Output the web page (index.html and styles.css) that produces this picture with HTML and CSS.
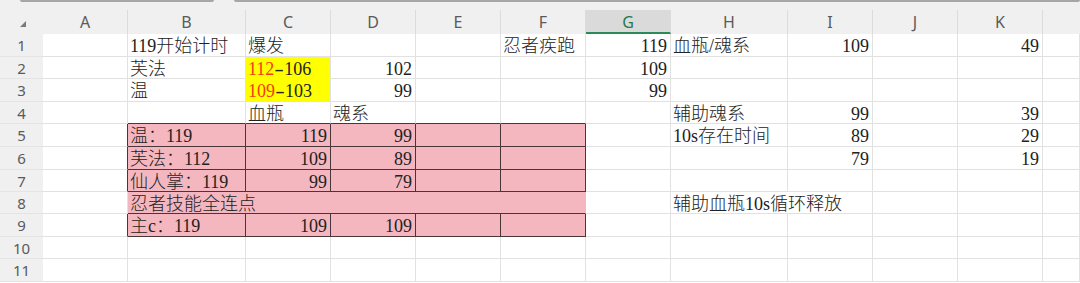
FILE: index.html
```html
<!DOCTYPE html>
<html lang="zh">
<head>
<meta charset="utf-8">
<title>Sheet</title>
<link rel="stylesheet" href="styles.css">
</head>
<body>
<div class="sheet">
  <div class="topbar"><span class="tab tab-a"></span><span class="tab tab-b"></span></div>
  <div class="hrow">
    <div class="hc corner"><svg width="6" height="6" viewBox="0 0 6 6"><polygon points="6,0 6,6 0,6" fill="#7a7a7a"/></svg></div>
    <div class="hc">A</div><div class="hc">B</div><div class="hc">C</div><div class="hc">D</div>
    <div class="hc">E</div><div class="hc">F</div><div class="hc sel">G</div><div class="hc">H</div>
    <div class="hc">I</div><div class="hc">J</div><div class="hc">K</div><div class="hc last"></div>
  </div>
  <div class="grid">
    <!-- row 1 -->
    <div class="rn">1</div><div class="c"></div><div class="c">119开始计时</div><div class="c">爆发</div><div class="c"></div><div class="c"></div><div class="c">忍者疾跑</div><div class="c r">119</div><div class="c">血瓶/魂系</div><div class="c r">109</div><div class="c"></div><div class="c r">49</div><div class="c"></div>
    <!-- row 2 -->
    <div class="rn">2</div><div class="c"></div><div class="c">芙法</div><div class="c yl yl-top"><span class="red">112</span><span class="dash">-</span>106</div><div class="c r">102</div><div class="c"></div><div class="c"></div><div class="c r">109</div><div class="c"></div><div class="c"></div><div class="c"></div><div class="c"></div><div class="c"></div>
    <!-- row 3 -->
    <div class="rn">3</div><div class="c"></div><div class="c">温</div><div class="c yl"><span class="red">109</span><span class="dash">-</span>103</div><div class="c r">99</div><div class="c"></div><div class="c"></div><div class="c r">99</div><div class="c"></div><div class="c"></div><div class="c"></div><div class="c"></div><div class="c"></div>
    <!-- row 4 -->
    <div class="rn">4</div><div class="c"></div><div class="c bt"></div><div class="c bt">血瓶</div><div class="c bt">魂系</div><div class="c bt"></div><div class="c bt"></div><div class="c"></div><div class="c">辅助魂系</div><div class="c r">99</div><div class="c"></div><div class="c r">39</div><div class="c"></div>
    <!-- row 5 -->
    <div class="rn">5</div><div class="c bl"></div><div class="c pk">温：119</div><div class="c pk r">119</div><div class="c pk r">99</div><div class="c pk"></div><div class="c pk"></div><div class="c"></div><div class="c">10s存在时间</div><div class="c r">89</div><div class="c"></div><div class="c r">29</div><div class="c"></div>
    <!-- row 6 -->
    <div class="rn">6</div><div class="c bl"></div><div class="c pk">芙法：112</div><div class="c pk r">109</div><div class="c pk r">89</div><div class="c pk"></div><div class="c pk"></div><div class="c"></div><div class="c"></div><div class="c r">79</div><div class="c"></div><div class="c r">19</div><div class="c"></div>
    <!-- row 7 -->
    <div class="rn">7</div><div class="c bl"></div><div class="c pk">仙人掌：119</div><div class="c pk r">99</div><div class="c pk r">79</div><div class="c pk"></div><div class="c pk"></div><div class="c"></div><div class="c"></div><div class="c"></div><div class="c"></div><div class="c"></div><div class="c"></div>
    <!-- row 8 -->
    <div class="rn">8</div><div class="c"></div><div class="c pk merged">忍者技能全连点</div><div class="c"></div><div class="c span2">辅助血瓶10s循环释放</div><div class="c"></div><div class="c"></div><div class="c"></div>
    <!-- row 9 -->
    <div class="rn">9</div><div class="c bl"></div><div class="c pk">主c：119</div><div class="c pk r">109</div><div class="c pk r">109</div><div class="c pk"></div><div class="c pk"></div><div class="c"></div><div class="c"></div><div class="c"></div><div class="c"></div><div class="c"></div><div class="c"></div>
    <!-- row 10 -->
    <div class="rn">10</div><div class="c"></div><div class="c"></div><div class="c"></div><div class="c"></div><div class="c"></div><div class="c"></div><div class="c"></div><div class="c"></div><div class="c"></div><div class="c"></div><div class="c"></div><div class="c"></div>
    <!-- row 11 -->
    <div class="rn">11</div><div class="c"></div><div class="c"></div><div class="c"></div><div class="c"></div><div class="c"></div><div class="c"></div><div class="c"></div><div class="c"></div><div class="c"></div><div class="c"></div><div class="c"></div><div class="c"></div>
  </div>
</div>
</body>
</html>
```

FILE: styles.css
```css
:root {
  --cols: 43px 85px 118px 85px 85px 85px 85px 85px 117px 85px 85px 85px 37px;
  --grid: #e1e1e1;
  --dark: #4a3638;
  --pink: #f4b7bf;
  --yellow: #ffff00;
}

* { box-sizing: border-box; }

html, body {
  margin: 0;
  padding: 0;
  background: #ffffff;
}

.sheet {
  width: 1080px;
  height: 283px;
  overflow: hidden;
  background: #ffffff;
}

.topbar {
  height: 2px;
  display: flex;
  background: #f0f0f0;
}

.tab {
  display: block;
  height: 2px;
  background: #a6a6a6;
  border-radius: 0 0 2px 2px;
}

.tab-a { margin-left: 20px; width: 194px; }
.tab-b { margin-left: 20px; flex: 1; }

.hrow {
  display: grid;
  grid-template-columns: var(--cols);
  height: 32px;
  padding-top: 8px;
  background: #f0f0f0;
}

.hc {
  height: 24px;
  border-right: 1px solid #dcdcdc;
  font-family: "Noto Sans", "Liberation Sans", sans-serif;
  font-size: 16px;
  line-height: 25px;
  color: #5a5a5a;
  text-align: center;
}

.hc.corner {
  border-right: none;
  display: flex;
  align-items: center;
  justify-content: center;
  padding-left: 2px;
  padding-top: 3px;
}

.hc.last { border-right: none; }

.hc.sel {
  background: #dadada;
  color: #1f7a4c;
  border-bottom: 2px solid #2a8a59;
  line-height: 24px;
}

.grid {
  display: grid;
  grid-template-columns: var(--cols);
  grid-template-rows: 23px 22px 23px 22px 23px 23px 22px 22px 23px 22px 23px;
}

.rn {
  background: #f0f0f0;
  border-bottom: 1px solid #e4e4e4;
  font-family: "Noto Sans", "Liberation Sans", sans-serif;
  font-size: 15px;
  line-height: 22px;
  color: #5a5a5a;
  text-align: center;
}

.c {
  border-right: 1px solid var(--grid);
  border-bottom: 1px solid var(--grid);
  padding: 3px 3px 0 2px;
  font-family: "Liberation Serif", "Noto Sans CJK SC", serif;
  font-weight: 300;
  font-size: 18px;
  line-height: 19px;
  color: #222222;
  white-space: nowrap;
  overflow: visible;
}

.c.r { text-align: right; }

.c.yl { background: var(--yellow); }
.c.yl-top { border-bottom-color: var(--yellow); }

.red { color: #f63c12; }

.dash {
  display: inline-block;
  transform: scaleX(1.6);
  margin: 0 2px;
}

.c.bt { border-bottom-color: var(--dark); }
.c.bl { border-right-color: var(--dark); }

.c.pk {
  background: var(--pink);
  border-right-color: var(--dark);
  border-bottom-color: var(--dark);
}

.c.merged {
  grid-column: span 5;
  border-right-color: var(--pink);
}

.c.span2 { grid-column: span 2; }
```
